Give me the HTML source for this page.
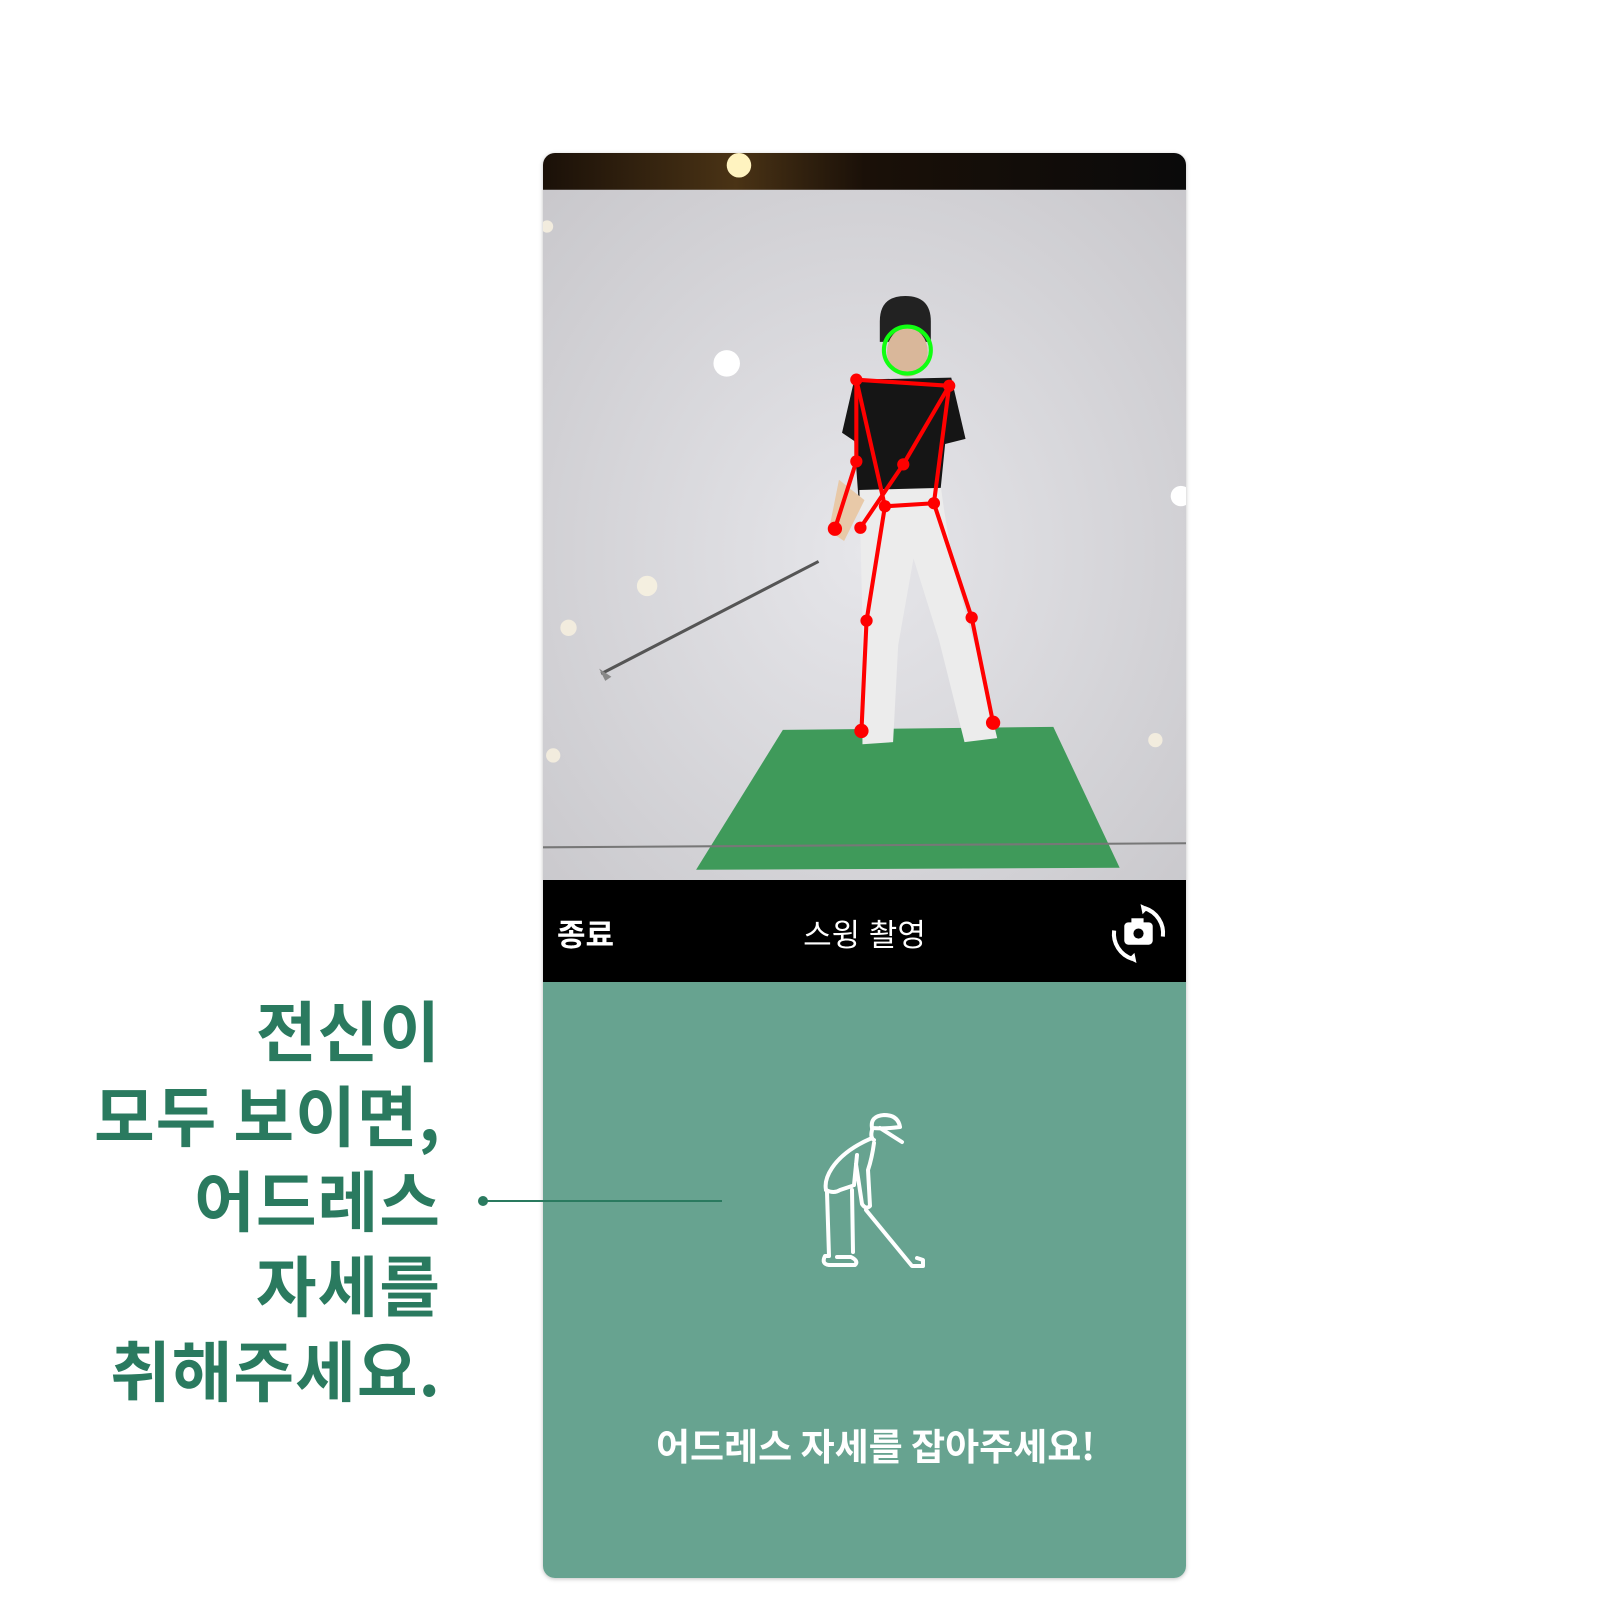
<!DOCTYPE html>
<html><head><meta charset="utf-8"><style>
body{margin:0;width:1600px;height:1600px;background:#fff;position:relative;overflow:hidden;font-family:"Liberation Sans","Noto Sans CJK KR",sans-serif}
.phone{position:absolute;left:543px;top:153px;width:643px;height:1425px;border-radius:12px;overflow:hidden;box-shadow:0 1px 4px rgba(0,0,0,.25)}
.bar{position:absolute;left:0;top:727px;width:643px;height:102px;background:#000;color:#fff}
.panel{position:absolute;left:0;top:829px;width:643px;height:596px;background:#67a390}
.big{position:absolute;right:1159px;text-align:right;color:#2a7a5f;font-weight:700;font-size:66px;line-height:85px;top:986px;white-space:nowrap;font-family:"Noto Sans CJK KR",sans-serif;letter-spacing:1px}
</style></head><body>
<div class="phone">
<svg width="643" height="727" viewBox="0 0 630 712" preserveAspectRatio="none" style="position:absolute;left:0;top:0">
<defs>
<radialGradient id="bg" cx="0.5" cy="0.55" r="0.7"><stop offset="0" stop-color="#e6e6ea"/><stop offset="1" stop-color="#c9c8cc"/></radialGradient>
<linearGradient id="top" x1="0" x2="1"><stop offset="0" stop-color="#1a1008"/><stop offset=".3" stop-color="#4a3315"/><stop offset=".5" stop-color="#1a1008"/><stop offset="1" stop-color="#0a0a0a"/></linearGradient>
</defs>
<rect width="630" height="712" fill="url(#bg)"/>
<rect width="630" height="36" fill="url(#top)"/>
<circle cx="192" cy="12" r="12" fill="#fff3c0"/>
<circle cx="180" cy="206" r="13" fill="#fff"/><circle cx="102" cy="424" r="10" fill="#f4efe0"/><circle cx="25" cy="465" r="8" fill="#f2ecde"/><circle cx="10" cy="590" r="7" fill="#f2ecde"/><circle cx="600" cy="575" r="7" fill="#f2ecde"/><circle cx="625" cy="336" r="10" fill="#fff"/><circle cx="4" cy="72" r="6" fill="#f2ecde"/>
<polygon points="235,565 500,562 565,700 150,702" fill="#3f9a5a"/>
<line x1="0" y1="680" x2="630" y2="676" stroke="#777" stroke-width="2"/>
<line x1="57" y1="510" x2="270" y2="400" stroke="#555" stroke-width="3"/>
<path d="M55,505 l12,8 l-6,4z" fill="#888"/>
<path d="M355,140 q-25,0 -25,25 v20 h50 v-20 q0,-25 -25,-25z" fill="#222"/>
<ellipse cx="357" cy="195" rx="20" ry="24" fill="#d9b79a"/>
<path d="M305,222 l95,-2 l14,60 l-20,5 l-5,50 l-80,2 l-4,-55 l-12,-8z" fill="#151515"/>
<path d="M310,330 l80,-2 q10,80 35,160 l20,85 l-32,4 l-25,-100 l-25,-80 l-15,85 l-5,95 l-30,2 l0,-120 z" fill="#ececec"/>
<path d="M290,320 l-10,50 l15,10 l20,-40 z" fill="#e8c9a8"/>
<g stroke="#f00" stroke-width="4" fill="none">
<polyline points="307,222 398,228 383,343 335,346 307,222"/>
<polyline points="398,228 353,305 311,367"/>
<polyline points="307,222 307,302 286,368"/>
<polyline points="335,346 317,458 312,566"/>
<polyline points="383,343 420,455 441,558"/>
</g>
<g fill="#f00"><circle cx="307" cy="222" r="6"/><circle cx="398" cy="228" r="6"/><circle cx="383" cy="343" r="6"/><circle cx="335" cy="346" r="6"/><circle cx="353" cy="305" r="6"/><circle cx="307" cy="302" r="6"/><circle cx="286" cy="368" r="7"/><circle cx="311" cy="367" r="6"/><circle cx="317" cy="458" r="6"/><circle cx="312" cy="566" r="7"/><circle cx="420" cy="455" r="6"/><circle cx="441" cy="558" r="7"/></g>
<circle cx="357" cy="193" r="23" fill="none" stroke="#1f1" stroke-width="4"/>
</svg>
<div class="bar">
<div style="position:absolute;left:14px;top:30px;font-size:31px;font-weight:700">종료</div>
<div style="position:absolute;left:0;width:643px;text-align:center;top:30px;font-size:31px">스윙 촬영</div>
<svg style="position:absolute;left:563px;top:20px" width="65" height="65" viewBox="0 0 64 64">
<path d="M38,8 A26,26 0 0 1 56,36" stroke="#fff" stroke-width="4" fill="none"/><path d="M34,4 l8,4 l-6,6z" fill="#fff"/>
<path d="M26,58 A26,26 0 0 1 8,30" stroke="#fff" stroke-width="4" fill="none"/><path d="M30,62 l-8,-4 l6,-6z" fill="#fff"/>
<rect x="18" y="22" width="28" height="22" rx="4" fill="#fff"/><rect x="25" y="18" width="12" height="6" fill="#fff"/><circle cx="32" cy="33" r="5" fill="#000"/>
</svg>
</div>
<div class="panel">
<div style="position:absolute;left:0;width:643px;text-align:center;top:435px;color:#fff;font-size:37px;font-weight:700;font-family:'Noto Sans CJK KR',sans-serif;padding-left:22px;box-sizing:border-box">어드레스 자세를 잡아주세요!</div>
</div>
</div>
<svg style="position:absolute;left:780px;top:1090px" width="160" height="200" viewBox="780 1090 160 200" fill="none" stroke="#fff" stroke-width="4" stroke-linecap="round" stroke-linejoin="round">
<path d="M872,1128 q-2,-12 12,-13 q14,0 16,12 q-14,2 -28,1z"/>
<path d="M880,1128 l22,14"/>
<path d="M872,1130 q-2,8 2,10"/>
<path d="M872,1138 q-28,12 -40,30 q-8,12 -6,22"/>
<path d="M874,1143 q-2,15 -6,27 l2,36 q-4,4 -8,-2 l-6,-40 M857,1155 l-3,30"/>
<path d="M826,1190 q8,4 14,0 q6,-2 12,-4"/>
<path d="M827,1192 l2,64 l-4,0 q-4,8 4,9 l26,0 q4,-4 -4,-8 l-14,0 M852,1190 l1,62"/>
<path d="M866,1210 l46,56 l11,0 l0,-6 l-6,-2"/>
</svg>
<div class="big">전신이<br>모두 보이면,<br>어드레스<br>자세를<br>취해주세요.</div>
<div style="position:absolute;left:484px;top:1200px;width:238px;height:2px;background:#2a7a5f"></div>
<div style="position:absolute;left:478px;top:1196px;width:10px;height:10px;border-radius:50%;background:#2a7a5f"></div>
</body></html>
